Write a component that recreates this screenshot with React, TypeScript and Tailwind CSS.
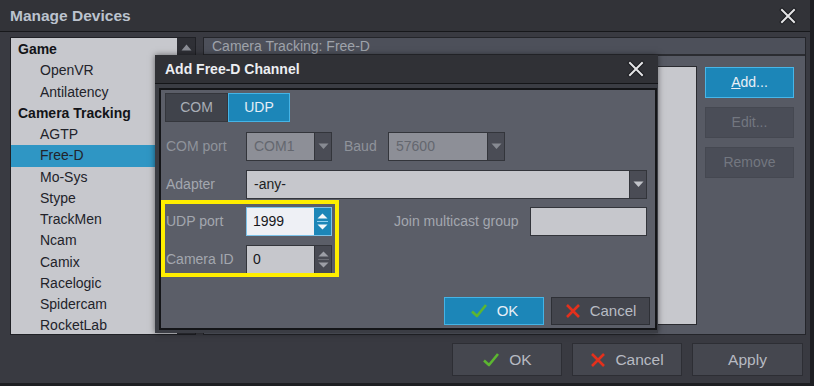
const font = { fontFamily: '"Liberation Sans", Arial, sans-serif' };

function CloseX({ size = 18 }: { size?: number }) {
  return (
    <svg width={size} height={size} viewBox="0 0 18 18">
      <path d="M3 3 L15 15 M15 3 L3 15" stroke="#1a1b1f" strokeWidth="4" strokeLinecap="square" />
      <path d="M3 3 L15 15 M15 3 L3 15" stroke="#e4e4e6" strokeWidth="2" strokeLinecap="square" />
    </svg>
  );
}

function Check() {
  return (
    <svg width="18" height="16" viewBox="0 0 18 16">
      <path d="M2 8.5 L7 13 L16 2" stroke="#5cb631" strokeWidth="2.6" fill="none" strokeLinejoin="round" />
    </svg>
  );
}

function RedX() {
  return (
    <svg width="16" height="16" viewBox="0 0 16 16">
      <path d="M2 2 L14 14 M14 2 L2 14" stroke="#e4301c" strokeWidth="2.6" />
    </svg>
  );
}

function DownTri({ color }: { color: string }) {
  return (
    <svg width="11" height="7" viewBox="0 0 11 7">
      <path d="M0.5 0.5 L10.5 0.5 L5.5 6 Z" fill={color} />
    </svg>
  );
}

function Combo({ w, value, disabled }: { w: string; value: string; disabled?: boolean }) {
  return (
    <div className={`flex h-[29px] ${w} border border-[#33353b]`}>
      <div
        className={`flex-1 flex items-center pl-[7px] text-[14px] ${
          disabled ? 'bg-[#8d8f97] text-[#64676f]' : 'bg-[#c6c7cc] text-[#1d1e23]'
        }`}
      >
        {value}
      </div>
      <div className="w-[17px] flex items-center justify-center bg-[#4a4c55] border-l border-[#33353b]">
        <DownTri color={disabled ? '#878a92' : '#c2c4ca'} />
      </div>
    </div>
  );
}

function Spin({ value, active }: { value: string; active?: boolean }) {
  const tri = active ? '#f4f7fa' : '#9c9ea6';
  return (
    <div className={`flex h-[29px] w-[86px] border ${active ? 'border-[#7cc2e8]' : 'border-[#33353b]'}`}>
      <div
        className={`flex-1 flex items-center pl-[6px] text-[14px] text-[#16171b] ${
          active ? 'bg-[#eef0f5]' : 'bg-[#c6c7cc]'
        }`}
      >
        {value}
      </div>
      <div
        className={`w-[17px] flex flex-col items-center justify-center gap-[2px] ${
          active ? 'bg-[#1c86b8]' : 'bg-[#484a53] border-l border-[#33353b]'
        }`}
      >
        <svg width="11" height="6" viewBox="0 0 11 6">
          <path d="M0.5 5.5 L10.5 5.5 L5.5 0.5 Z" fill={tri} />
        </svg>
        <div className={`w-[11px] h-px ${active ? 'bg-[#8fd0f0]' : 'bg-[#6a6c74]'}`} />
        <svg width="11" height="6" viewBox="0 0 11 6">
          <path d="M0.5 0.5 L10.5 0.5 L5.5 5.5 Z" fill={tri} />
        </svg>
      </div>
    </div>
  );
}

const items: { label: string; header?: boolean; selected?: boolean }[] = [
  { label: 'Game', header: true },
  { label: 'OpenVR' },
  { label: 'Antilatency' },
  { label: 'Camera Tracking', header: true },
  { label: 'AGTP' },
  { label: 'Free-D', selected: true },
  { label: 'Mo-Sys' },
  { label: 'Stype' },
  { label: 'TrackMen' },
  { label: 'Ncam' },
  { label: 'Camix' },
  { label: 'Racelogic' },
  { label: 'Spidercam' },
  { label: 'RocketLab' },
];

export default function App() {
  return (
    <div style={font} className="relative w-[814px] h-[386px] overflow-hidden bg-[#393a41] border-r-[4px] border-b-[3px] border-[#1d1e22]">
      {/* title bar */}
      <div className="h-[32px] flex items-center justify-between pl-[10px] pr-[13px] bg-[#323338] border-b border-[#17181b]">
        <span className="text-[15.5px] font-bold text-[#bcc3ce]">Manage Devices</span>
        <CloseX />
      </div>

      {/* body */}
      <div className="flex pl-[10px] pt-[5px] gap-[7px] h-[303px]">
        {/* device list */}
        <div className="flex w-[186px] h-[298px] border border-[#202126]">
          <div className="flex-1 bg-[#c7c8cd] pt-px">
            {items.map((it) => (
              <div
                key={it.label}
                className={`h-[21.25px] flex items-center ${it.header ? 'pl-[7px]' : 'pl-[29px]'} ${
                  it.selected ? 'bg-[#2f96c4]' : ''
                } ${it.header ? 'text-[14px] font-bold text-[#131418]' : 'text-[14px] text-[#22232a]'}`}
              >
                {it.label}
              </div>
            ))}
          </div>
          <div className="w-[18px] bg-[#2f3036] flex justify-center pt-[6px]">
            <svg width="11" height="7" viewBox="0 0 11 7">
              <path d="M0.5 6.5 L10.5 6.5 L5.5 0.5 Z" fill="#8b8d95" />
            </svg>
          </div>
        </div>

        {/* right panel */}
        <div className="w-[603px] h-[298px] flex flex-col border border-[#24252a]">
          <div className="h-[18px] flex items-center pl-[8px] bg-[#4d505a] border-b-2 border-[#2b2c31] text-[14px] text-[#9fa3ab]">
            Camera Tracking: Free-D
          </div>
          <div className="flex-1 flex bg-[#575a64] pl-[10px] pt-[10px] pb-[9px] pr-[11px] gap-[8px]">
            <div className="flex-1 bg-[#c7c8cd] border border-[#2a2b30]" />
            <div className="w-[89px] flex flex-col gap-[9px] pt-px">
              <div className="h-[31px] flex items-center justify-center bg-[#1c86b8] border border-[#48b6e8] text-[14px] text-[#e8eff6]">
                <span>
                  <span className="underline">A</span>dd...
                </span>
              </div>
              <div className="h-[31px] flex items-center justify-center bg-[#4a4d57] border border-[#454851] text-[14px] text-[#737780]">
                Edit...
              </div>
              <div className="h-[31px] flex items-center justify-center bg-[#4a4d57] border border-[#454851] text-[14px] text-[#737780]">
                Remove
              </div>
            </div>
          </div>
        </div>
      </div>

      {/* bottom buttons */}
      <div className="flex justify-end gap-[10px] pr-[7px] mt-[8px]">
        <div className="w-[110px] h-[33px] flex items-center justify-center gap-[9px] bg-[#45474f] border border-[#2d2e34] text-[15.5px] text-[#b7bac2]">
          <Check />
          OK
        </div>
        <div className="w-[110px] h-[33px] flex items-center justify-center gap-[9px] bg-[#45474f] border border-[#2d2e34] text-[15.5px] text-[#b7bac2]">
          <RedX />
          Cancel
        </div>
        <div className="w-[111px] h-[33px] flex items-center justify-center bg-[#45474f] border border-[#2d2e34] text-[15.5px] text-[#b7bac2]">
          Apply
        </div>
      </div>

      {/* Add Free-D Channel dialog */}
      <div className="absolute left-[155px] top-[55px] w-[503px] h-[278px] flex flex-col bg-[#3b3d44] shadow-[0_0_6px_rgba(0,0,0,0.5)]">
        <div className="h-[29px] flex items-center justify-between pl-[10px] pr-[13px] bg-[#303136] border-b border-[#141518]">
          <span className="text-[14px] font-bold text-[#eceef2]">Add Free-D Channel</span>
          <CloseX />
        </div>
        <div className="flex-1 pl-[4px] pr-[1px] pt-[4px] pb-[3px]">
          <div className="relative h-full border-2 border-[#141518] bg-[#5b5e68] flex flex-col">
            {/* tabs */}
            <div className="flex ml-[4px] mt-[3px]">
              <div className="w-[63px] h-[29px] flex items-center justify-center bg-[#40434b] border border-[#34363c] text-[14px] text-[#a9aeb6]">
                COM
              </div>
              <div className="w-[62px] h-[29px] flex items-center justify-center bg-[#1c86b8] border border-[#45b4e6] text-[14px] text-[#e6eef6]">
                UDP
              </div>
            </div>

            {/* COM port */}
            <div className="flex items-center mt-[10px] pl-[5px]">
              <span className="w-[80px] text-[14px] text-[#8f939b]">COM port</span>
              <Combo w="w-[86px]" value="COM1" disabled />
              <span className="w-[44px] ml-[12px] text-[14px] text-[#8f939b]">Baud</span>
              <Combo w="w-[117px]" value="57600" disabled />
            </div>

            {/* Adapter */}
            <div className="flex items-center mt-[9px] pl-[5px]">
              <span className="w-[80px] text-[14px] text-[#a3a7af]">Adapter</span>
              <Combo w="w-[401px]" value="-any-" />
            </div>

            {/* UDP port */}
            <div className="flex items-center mt-[8px] pl-[5px]">
              <span className="w-[80px] text-[14px] text-[#a3a7af]">UDP port</span>
              <Spin value="1999" active />
              <span className="ml-[62px] w-[136px] text-[14px] text-[#a3a7af]">Join multicast group</span>
              <div className="w-[117px] h-[29px] bg-[#c6c7cc] border border-[#33353b]" />
            </div>

            {/* Camera ID */}
            <div className="flex items-center mt-[9px] pl-[5px]">
              <span className="w-[80px] text-[14px] text-[#a3a7af]">Camera ID</span>
              <Spin value="0" />
            </div>

            {/* dialog buttons */}
            <div className="flex justify-end gap-[7px] mt-auto mb-[3px] pr-[5px]">
              <div className="w-[100px] h-[28px] flex items-center justify-center gap-[9px] bg-[#1c86b8] border border-[#45b4e6] text-[15px] text-[#e8eff6]">
                <Check />
                OK
              </div>
              <div className="w-[99px] h-[28px] flex items-center justify-center gap-[9px] bg-[#43454d] border border-[#2e3036] text-[15px] text-[#b8bcc4]">
                <RedX />
                Cancel
              </div>
            </div>

            {/* highlight annotation */}
            <div className="absolute left-0 top-[110px] w-[178px] h-[77px] border-[4px] border-[#ffee00] pointer-events-none" />
          </div>
        </div>
      </div>
    </div>
  );
}
